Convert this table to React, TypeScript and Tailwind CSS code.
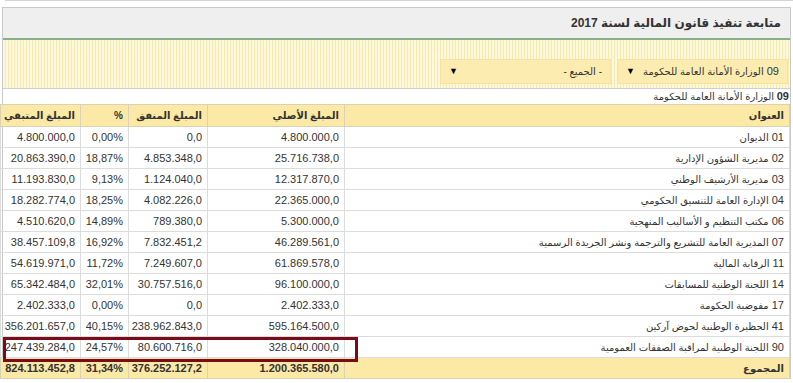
const rows = [
  { code: '01', name: 'الديوان', original: '4.800.000,0', spent: '0,0', pct: '0,00%', rest: '4.800.000,0' },
  { code: '02', name: 'مديرية الشؤون الإدارية', original: '25.716.738,0', spent: '4.853.348,0', pct: '18,87%', rest: '20.863.390,0' },
  { code: '03', name: 'مديرية الأرشيف الوطني', original: '12.317.870,0', spent: '1.124.040,0', pct: '9,13%', rest: '11.193.830,0' },
  { code: '04', name: 'الإدارة العامة للتنسيق الحكومي', original: '22.365.000,0', spent: '4.082.226,0', pct: '18,25%', rest: '18.282.774,0' },
  { code: '06', name: 'مكتب التنظيم و الأساليب المنهجية', original: '5.300.000,0', spent: '789.380,0', pct: '14,89%', rest: '4.510.620,0' },
  { code: '07', name: 'المديرية العامة للتشريع والترجمة ونشر الجريدة الرسمية', original: '46.289.561,0', spent: '7.832.451,2', pct: '16,92%', rest: '38.457.109,8' },
  { code: '11', name: 'الرقابة المالية', original: '61.869.578,0', spent: '7.249.607,0', pct: '11,72%', rest: '54.619.971,0' },
  { code: '14', name: 'اللجنة الوطنية للمسابقات', original: '96.100.000,0', spent: '30.757.516,0', pct: '32,01%', rest: '65.342.484,0' },
  { code: '17', name: 'مفوضية الحكومة', original: '2.402.333,0', spent: '0,0', pct: '0,00%', rest: '2.402.333,0' },
  { code: '41', name: 'الحظيرة الوطنية لحوض آركين', original: '595.164.500,0', spent: '238.962.843,0', pct: '40,15%', rest: '356.201.657,0' },
  { code: '90', name: 'اللجنة الوطنية لمراقبة الصفقات العمومية', original: '328.040.000,0', spent: '80.600.716,0', pct: '24,57%', rest: '247.439.284,0' },
]

function Select({ code, label }: { code?: string; label: string }) {
  return (
    <div className="flex h-[25px] w-[171px] items-center justify-between whitespace-nowrap border border-[#f3e3a4] bg-[#fcecb0] px-[8px] text-[#333]">
      <span className="text-[10px]">
        {code && <span className="text-[11px]">{code} </span>}
        {label}
      </span>
      <span className="text-[9px] text-black">▼</span>
    </div>
  )
}

const th = 'border border-[#d9d2b4] px-[5px] text-right whitespace-nowrap'
const td = 'border border-[#dcdcdc] px-[5px] text-right whitespace-nowrap'

export default function App() {
  return (
    <div
      dir="rtl"
      className="h-[383px] w-[793px] overflow-hidden bg-white text-[#333]"
      style={{ fontFamily: '"Liberation Sans", "DejaVu Sans", sans-serif' }}
    >
      <div className="ml-[5px] h-px bg-[#d4d4d4]" />
      <div className="ml-[2px] mr-[2px] mt-[6px] border-l border-r border-t border-[#c9c9c9]">
        <div className="flex h-[30px] items-center whitespace-nowrap bg-[#efefef] pr-[9px] text-[12px] font-bold text-[#333]">
          متابعة تنفيذ قانون المالية لسنة 2017
        </div>
        <div className="h-[2px] bg-[#86b086]" />
        <div className="flex h-[48px] items-end gap-[6px] bg-[repeating-linear-gradient(90deg,#fef8dc_0px,#fef8dc_2px,#f8e9ae_2px,#f8e9ae_3px)] pb-[4px] pr-[2px]">
          <Select code="09" label="الوزارة الأمانة العامة للحكومة" />
          <Select label="- الجميع -" />
        </div>
        <div className="flex h-[16px] items-center whitespace-nowrap border-t border-[#cfcfcf] pr-[1px]">
          <b className="text-[11px]">09</b>
          <span className="text-[10px]">&nbsp;الوزارة الأمانة العامة للحكومة</span>
        </div>
        <div className="relative">
          <table className="w-full table-fixed border-collapse text-[11px]">
            <colgroup>
              <col className="w-[445px]" />
              <col className="w-[137px]" />
              <col className="w-[79px]" />
              <col className="w-[48px]" />
              <col className="w-[80px]" />
            </colgroup>
            <thead>
              <tr className="h-[22px] bg-[#fde9a6] text-[10px] font-bold">
                <th className={th}>العنوان</th>
                <th className={th}>المبلغ الأصلي</th>
                <th className={th}>المبلغ المنفق</th>
                <th className={th}>%</th>
                <th className={th}>المبلغ المتبقي</th>
              </tr>
            </thead>
            <tbody>
              {rows.map((r) => (
                <tr key={r.code} className="h-[21px]">
                  <td className={td}>
                    {r.code} <span className="text-[10px]">{r.name}</span>
                  </td>
                  <td className={td}>{r.original}</td>
                  <td className={td}>{r.spent}</td>
                  <td className={td}>{r.pct}</td>
                  <td className={td}>{r.rest}</td>
                </tr>
              ))}
              <tr className="h-[21px] bg-[#fde9a6] font-bold">
                <td className={th + ' text-[10px]'}>المجموع</td>
                <td className={th}>1.200.365.580,0</td>
                <td className={th}>376.252.127,2</td>
                <td className={th}>31,34%</td>
                <td className={th}>824.113.452,8</td>
              </tr>
            </tbody>
          </table>
          <div className="pointer-events-none absolute left-0 top-[233px] h-[25px] w-[355px] border-[3px] border-[#7a0b1b]" />
        </div>
      </div>
    </div>
  )
}
